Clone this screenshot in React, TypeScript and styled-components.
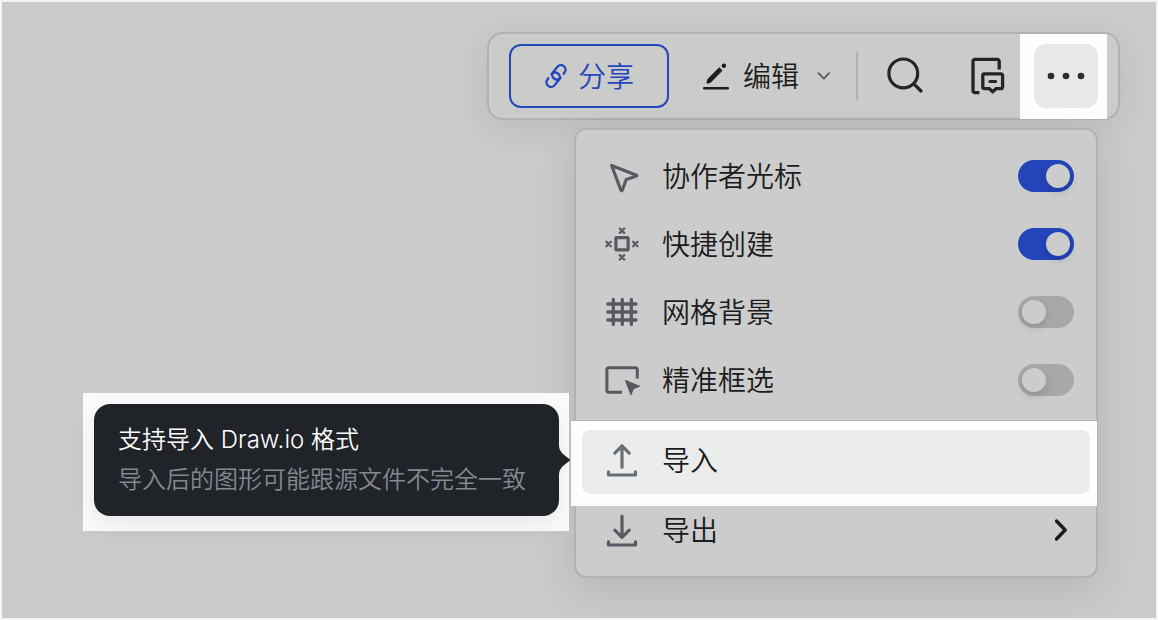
import React from "react";
import styled, { createGlobalStyle } from "styled-components";

const GlobalStyle = createGlobalStyle`
  *, *::before, *::after { box-sizing: border-box; }
  body {
    margin: 0;
    background: #f4f4f4;
    color: #1b1c20;
    font-family: Inter, "Noto Sans CJK SC", sans-serif;
    font-size: 28px;
    font-weight: 350;
    line-height: 40px;
  }
  button {
    margin: 0;
    padding: 0;
    border: 0;
    background: none;
    color: inherit;
    font: inherit;
    cursor: pointer;
  }
`;

const Frame = styled.div`
  display: flex;
  min-height: 100vh;
  padding: 2px;
`;

const Stage = styled.main`
  flex: 1;
  display: flex;
  flex-direction: column;
  align-items: flex-end;
  gap: 8px;
  padding: 30px 36px 40px;
  background: #cacaca;
  overflow: hidden;
`;

const Toolbar = styled.div`
  display: flex;
  align-items: center;
  height: 88px;
  padding: 0 11px 0 20px;
  border: 2px solid #b1b1b5;
  border-radius: 16px;
  background: #cbcbca;
  box-shadow: 0 8px 32px rgba(0, 0, 0, 0.07);
`;

const ShareButton = styled.button`
  display: flex;
  align-items: center;
  justify-content: center;
  gap: 8px;
  width: 160px;
  height: 64px;
  padding-right: 2px;
  border: 2px solid #2348bd;
  border-radius: 12px;
  color: #2348bd;
`;

const ShareLabel = styled.span`
  padding-top: 2px;
`;

const EditButton = styled.button`
  display: flex;
  align-items: center;
  height: 64px;
  padding: 0 24px 0 33px;
`;

const EditLabel = styled.span`
  padding: 2px 17px 0 13px;
`;

const Separator = styled.span`
  width: 2px;
  height: 48px;
  background: #b1b1b3;
`;

const ToolGroup = styled.div`
  display: flex;
  align-items: center;
  gap: 43px;
  padding: 0 12px 0 27px;
`;

const ToolButton = styled.button`
  display: flex;
  color: #23252b;
`;

const Spotlight = styled.div`
  align-self: stretch;
  display: flex;
  align-items: flex-start;
  margin-bottom: -1px;
  padding: 10px 9px 0 14px;
  background: #fefefe;
`;

const MoreButton = styled.button`
  display: flex;
  align-items: center;
  justify-content: center;
  width: 64px;
  height: 64px;
  border-radius: 12px;
  background: #e7e8e7;
  color: #2b2d33;
`;

const Menu = styled.div`
  width: 524px;
  margin-right: 22px;
  padding-top: 12px;
  border: 2px solid #b1b1b6;
  border-radius: 12px;
  background: #cccccc;
  box-shadow: 0 12px 40px rgba(0, 0, 0, 0.1);
`;

const ToggleRow = styled.label`
  display: flex;
  align-items: center;
  gap: 20px;
  height: 68px;
  padding: 0 22px 0 26px;
  cursor: pointer;
`;

const RowIcon = styled.span`
  display: flex;
  color: #575a62;
`;

const RowLabel = styled.span`
  flex: 1;
  padding-top: 2px;
  text-align: left;
`;

const Switch = styled.input`
  appearance: none;
  display: flex;
  align-items: center;
  width: 56px;
  height: 32px;
  margin: 0;
  padding: 0 4px;
  border-radius: 16px;
  background: #a7a8aa;
  cursor: pointer;

  &::before {
    content: "";
    width: 24px;
    height: 24px;
    border-radius: 50%;
    background: #cccccc;
    box-shadow: 0 4px 8px rgba(0, 0, 0, 0.14);
  }

  &:checked {
    justify-content: flex-end;
    background: #2245ba;
  }
`;

const ImportSection = styled.div`
  position: relative;
  height: 86px;
  margin: 6px -1px 0 -5px;
  padding: 9px 7px 0 11px;
  border-top: 1px solid #b3b3b3;
  background: #fefefe;
`;

const ImportItem = styled.button`
  display: flex;
  align-items: center;
  gap: 20px;
  width: 100%;
  height: 64px;
  padding: 0 20px 4px;
  border-radius: 8px;
  background: #ebeded;

  ${RowIcon} { color: #6a6e77; }
`;

const ExportItem = styled.button`
  display: flex;
  align-items: center;
  gap: 20px;
  width: 100%;
  height: 70px;
  padding: 0 23px 22px 26px;
`;

const TipSpotlight = styled.div`
  position: absolute;
  top: -28px;
  right: calc(100% + 2px);
  padding: 11px 10px 15px 11px;
  background: #fbfbfb;
`;

const Tooltip = styled.div`
  position: relative;
  padding: 16px 33px 16px 24px;
  border-radius: 16px;
  background: #202328;
  color: #ffffff;
  box-shadow: 0 8px 24px rgba(0, 0, 0, 0.08);
  font-size: 24px;
  white-space: nowrap;
`;

const TipLine = styled.p<{ $muted?: boolean }>`
  margin: 0;
  color: ${(p) => (p.$muted ? "#858890" : "#ffffff")};
`;

const TipArrow = styled.svg`
  position: absolute;
  top: 42px;
  left: 100%;
  display: block;
`;

type IconProps = { size: number; stroke: number; children: React.ReactNode };

const Icon = ({ size, stroke, children }: IconProps) => (
  <svg
    width={size}
    height={size}
    viewBox={`0 0 ${size} ${size}`}
    fill="none"
    stroke="currentColor"
    strokeWidth={stroke}
    strokeLinecap="round"
    strokeLinejoin="round"
    aria-hidden="true"
  >
    {children}
  </svg>
);

const LinkIcon = () => (
  <Icon size={28} stroke={2.4}>
    <g transform="rotate(-52 14 14)">
      <path d="M15.4 18.6A4.6 4.6 0 0 1 15.4 9.4H22A4.6 4.6 0 0 1 22 18.6H20.6" />
      <path d="M12.6 9.4A4.6 4.6 0 0 1 12.6 18.6H6A4.6 4.6 0 0 1 6 9.4H7.4" />
    </g>
  </Icon>
);

const PenIcon = () => (
  <Icon size={28} stroke={2.6}>
    <path d="M2.3 26.3H25.7" />
    <path
      d="M17.4 6L20 8.6L8.4 20.4L5 21.2L5.6 17.8Z"
      fill="currentColor"
      strokeWidth={1}
    />
    <circle cx="21.9" cy="3.7" r="2.2" fill="currentColor" stroke="none" />
  </Icon>
);

const ChevronDownIcon = () => (
  <Icon size={16} stroke={1.9}>
    <path d="M2.5 5.2L7.8 10.6L13.1 5.2" stroke="#5b6068" />
  </Icon>
);

const SearchIcon = () => (
  <Icon size={40} stroke={3.2}>
    <circle cx="18.3" cy="17.4" r="14.4" />
    <path d="M28.8 27.9L36 35" />
  </Icon>
);

const NoteIcon = () => (
  <Icon size={40} stroke={3.3}>
    <path
      d="M31.2 13.4V5.3a2 2 0 0 0-2-2H7a2 2 0 0 0-2 2V34.6a2 2 0 0 0 2 2h4.4"
      strokeLinecap="butt"
    />
    <path d="M16.4 17.9h16.6a1.6 1.6 0 0 1 1.6 1.6v11.6a1.6 1.6 0 0 1-1.6 1.6h-5l-3.3 3-3.3-3h-5a1.6 1.6 0 0 1-1.6-1.6V19.5a1.6 1.6 0 0 1 1.6-1.6z" />
    <path d="M21.8 25.6h5.8" strokeWidth={3} />
  </Icon>
);

const MoreIcon = () => (
  <Icon size={40} stroke={0}>
    {[5, 20, 35].map((x) => (
      <circle key={x} cx={x} cy="20" r="3.3" fill="currentColor" stroke="none" />
    ))}
  </Icon>
);

const CursorIcon = () => (
  <Icon size={40} stroke={3.1}>
    <path d="M9.6 9.5L34.6 19.2Q35.2 19.8 34.4 20.1L24.2 23.5L20.2 34.4Q19.6 35.6 19 34.4Z" />
  </Icon>
);

const QuickCreateIcon = () => (
  <Icon size={40} stroke={2.3}>
    <rect x="13.9" y="13.7" width="12.2" height="12.2" rx="0.5" strokeWidth={3.2} />
    {[
      [20, 6.7],
      [20, 33.3],
      [6.6, 20],
      [33.4, 20],
    ].map(([x, y]) => (
      <path key={`${x}-${y}`} d={`M${x - 2.2} ${y - 2.2}l4.4 4.4m0 -4.4l-4.4 4.4`} />
    ))}
  </Icon>
);

const GridIcon = () => (
  <Icon size={40} stroke={3.3}>
    <path d="M5.8 12H34M5.8 20H34M5.8 28H34M11.3 7.4V32.4M20.3 7.4V32.4M29.3 7.4V32.4" />
  </Icon>
);

const MarqueeIcon = () => (
  <Icon size={40} stroke={3}>
    <path
      d="M35.3 18.4V9.8a2 2 0 0 0-2-2H6.9a2 2 0 0 0-2 2V30.2a2 2 0 0 0 2 2H20"
      strokeLinecap="butt"
    />
    <path
      d="M23.6 20.6L37.4 26.2L31.4 28.6L29 34.6Z"
      fill="currentColor"
      strokeWidth={1.2}
    />
  </Icon>
);

const UploadIcon = () => (
  <Icon size={40} stroke={3.2}>
    <path d="M20 27.2V6.2M12.8 13.2L20 5.8L27.2 13.2" />
    <path d="M6.5 31.8V35H33.5V31.8" />
  </Icon>
);

const DownloadIcon = () => (
  <Icon size={40} stroke={3.2}>
    <path d="M20 6V27.2M12.8 20.2L20 27.4L27.2 20.2" />
    <path d="M6.5 31.8V35H33.5V31.8" />
  </Icon>
);

const ChevronRightIcon = () => (
  <Icon size={24} stroke={3.4}>
    <path d="M7.5 3L16.2 12L7.5 21" />
  </Icon>
);

const toggles = [
  { id: "cursor", label: "协作者光标", icon: <CursorIcon />, on: true },
  { id: "quick", label: "快捷创建", icon: <QuickCreateIcon />, on: true },
  { id: "grid", label: "网格背景", icon: <GridIcon />, on: false },
  { id: "marquee", label: "精准框选", icon: <MarqueeIcon />, on: false },
];

export default function App() {
  return (
    <>
      <GlobalStyle />
      <Frame>
        <Stage>
          <Toolbar>
            <ShareButton type="button">
              <LinkIcon />
              <ShareLabel>分享</ShareLabel>
            </ShareButton>
            <EditButton type="button">
              <PenIcon />
              <EditLabel>编辑</EditLabel>
              <ChevronDownIcon />
            </EditButton>
            <Separator />
            <ToolGroup>
              <ToolButton type="button" aria-label="搜索">
                <SearchIcon />
              </ToolButton>
              <ToolButton type="button" aria-label="评论">
                <NoteIcon />
              </ToolButton>
            </ToolGroup>
            <Spotlight>
              <MoreButton type="button" aria-label="更多">
                <MoreIcon />
              </MoreButton>
            </Spotlight>
          </Toolbar>

          <Menu>
            {toggles.map((t) => (
              <ToggleRow key={t.id} htmlFor={t.id}>
                <RowIcon>{t.icon}</RowIcon>
                <RowLabel>{t.label}</RowLabel>
                <Switch id={t.id} type="checkbox" role="switch" defaultChecked={t.on} />
              </ToggleRow>
            ))}
            <ImportSection>
              <ImportItem type="button" aria-describedby="import-tip">
                <RowIcon>
                  <UploadIcon />
                </RowIcon>
                <RowLabel>导入</RowLabel>
              </ImportItem>
              <TipSpotlight>
                <Tooltip id="import-tip" role="tooltip">
                  <TipLine>支持导入 Draw.io 格式</TipLine>
                  <TipLine $muted>导入后的图形可能跟源文件不完全一致</TipLine>
                  <TipArrow width="12" height="28" viewBox="0 0 12 28" aria-hidden="true">
                    <path d="M-1 0H0C0.5 4 2 6 4 8L10.6 13.2Q11.6 14 10.6 14.8L4 20C2 22 0.5 24 0 28H-1Z" fill="#202328" />
                  </TipArrow>
                </Tooltip>
              </TipSpotlight>
            </ImportSection>
            <ExportItem type="button">
              <RowIcon>
                <DownloadIcon />
              </RowIcon>
              <RowLabel>导出</RowLabel>
              <ChevronRightIcon />
            </ExportItem>
          </Menu>
        </Stage>
      </Frame>
    </>
  );
}
